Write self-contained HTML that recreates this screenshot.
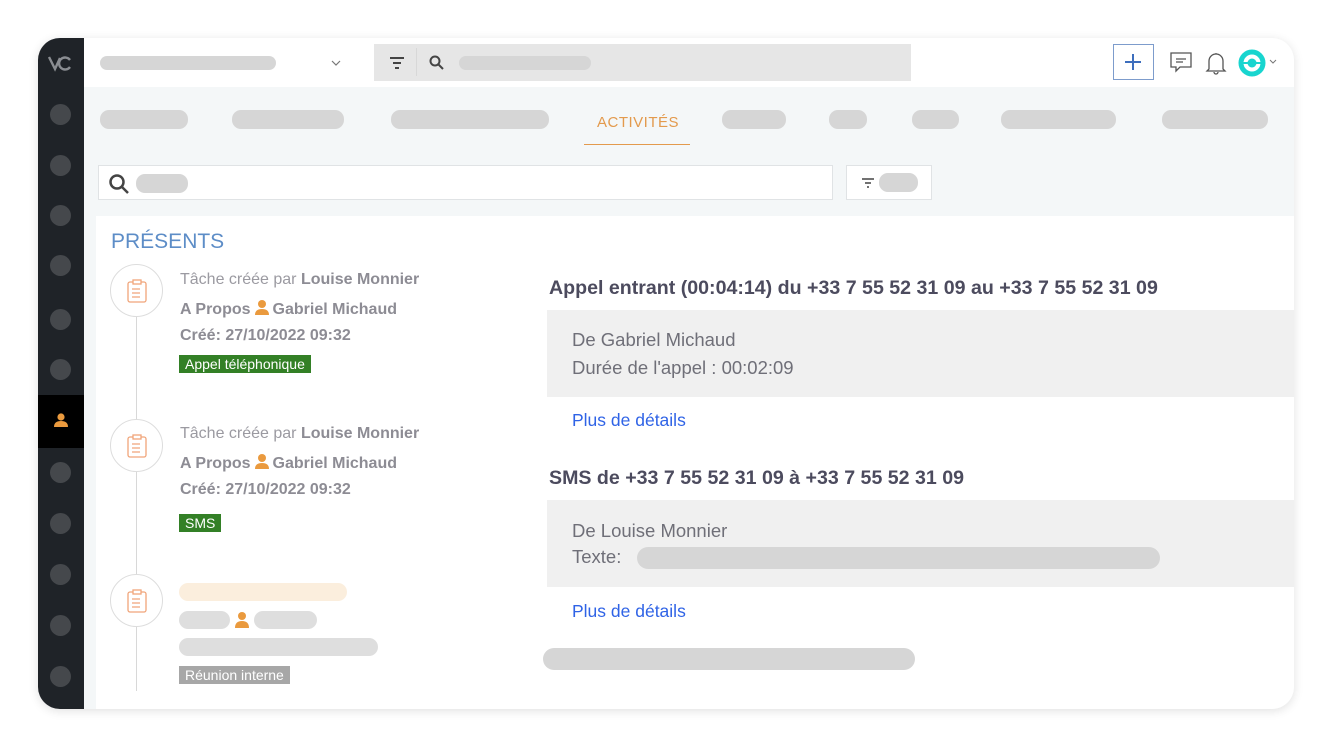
<!DOCTYPE html><html><head><meta charset="utf-8"><style>
*{margin:0;padding:0;box-sizing:border-box}
body{width:1332px;height:747px;background:#fff;font-family:"Liberation Sans",sans-serif;position:relative;overflow:hidden}
.a{position:absolute}
.card{left:38px;top:38px;width:1256px;height:671px;border-radius:22px;background:#f4f7f8;box-shadow:0 2px 10px rgba(0,0,0,.12);overflow:hidden}
.sb{left:0;top:0;width:46px;height:671px;background:#1f2328}
.dot{left:12px;width:21px;height:21px;border-radius:50%;background:#45484c}
.pill{background:#d6d6d6;border-radius:9px;height:18px}
.t{color:#8d8c94;font-size:16px;font-weight:bold}
.tag{color:#fff;font-size:14px;padding:1px 6px;}
.blue{color:#2f63e6;font-size:17.5px}
.pi{display:inline-block;vertical-align:-2px;margin:0 3px}
</style></head><body>
<div class="a card">
 <div class="a sb">
  <svg class="a" style="left:9px;top:16px" width="26" height="18" viewBox="0 0 26 18"><path d="M2 3 L8 15 L13 4" fill="none" stroke="#8a8d92" stroke-width="2.4"/><path d="M23 6 A6 6 0 1 0 23 13" fill="none" stroke="#8a8d92" stroke-width="2.4"/></svg>
  <div class="a dot" style="top:66px"></div><div class="a dot" style="top:117px"></div><div class="a dot" style="top:167px"></div><div class="a dot" style="top:217px"></div><div class="a dot" style="top:271px"></div><div class="a dot" style="top:321px"></div>
  <div class="a" style="left:0;top:357px;width:46px;height:53px;background:#000"></div>
  <svg class="a" style="left:15px;top:374px" width="16" height="16" viewBox="0 0 16 16"><circle cx="8" cy="5" r="3.6" fill="#ea9a3e"/><path d="M1 15 Q1 9 8 9 Q15 9 15 15Z" fill="#ea9a3e"/></svg>
  <div class="a dot" style="top:424px"></div><div class="a dot" style="top:475px"></div><div class="a dot" style="top:526px"></div><div class="a dot" style="top:577px"></div><div class="a dot" style="top:628px"></div>
 </div>
 <div class="a" style="left:46px;top:0;width:1210px;height:49px;background:#fff"></div>
 <div class="a pill" style="left:62px;top:18px;width:176px;height:14px"></div>
 <svg class="a" style="left:292px;top:21px" width="12" height="8"><path d="M2 2 L6 6 L10 2" fill="none" stroke="#777" stroke-width="1.2"/></svg>
 <div class="a" style="left:336px;top:6px;width:537px;height:37px;background:#e6e6e6"></div>
 <div class="a" style="left:378px;top:10px;width:1px;height:28px;background:#d8d8d8"></div>
 <svg class="a" style="left:352px;top:19px" width="14" height="12"><path d="M0 1h14M3 6h8M5 11h4" stroke="#444" stroke-width="2"/></svg>
 <svg class="a" style="left:391px;top:17px" width="15" height="15"><circle cx="6" cy="6" r="4.5" fill="none" stroke="#444" stroke-width="2"/><path d="M9.5 9.5L14 14" stroke="#444" stroke-width="2"/></svg>
 <div class="a pill" style="left:421px;top:18px;width:132px;height:14px"></div>
 <div class="a" style="left:1075px;top:6px;width:41px;height:36px;border:1.5px solid #7d9ccc"></div>
 <svg class="a" style="left:1086px;top:15px" width="18" height="18"><path d="M9 1v16M1 9h16" stroke="#3d6ebd" stroke-width="2"/></svg>
 <svg class="a" style="left:1131px;top:13px" width="24" height="24" viewBox="0 0 24 24"><path d="M2 2h20v14H11l-4 4v-4H2z" fill="none" stroke="#555" stroke-width="1.3"/><path d="M7 8h10M7 11h7" stroke="#555" stroke-width="1.3"/></svg>
 <svg class="a" style="left:1167px;top:13px" width="22" height="24" viewBox="0 0 22 24"><path d="M4 18V10a7 7 0 0 1 14 0v8l2 2H2z" fill="none" stroke="#555" stroke-width="1.3"/><path d="M9 21a2 2 0 0 0 4 0" fill="none" stroke="#555" stroke-width="1.3"/><path d="M11 2v1" stroke="#555"/></svg>
 <svg class="a" style="left:1200px;top:11px" width="28" height="28"><circle cx="14" cy="14" r="11" fill="none" stroke="#18d5cf" stroke-width="5"/><circle cx="14" cy="14" r="4.5" fill="#18d5cf"/><path d="M3 14h22" stroke="#18d5cf" stroke-width="2"/></svg>
 <svg class="a" style="left:1231px;top:21px" width="8" height="6"><path d="M1 1l3 3 3-3" fill="none" stroke="#777"/></svg>
 <div class="a pill" style="left:62px;top:72px;width:88px;height:19px"></div>
 <div class="a pill" style="left:194px;top:72px;width:112px;height:19px"></div>
 <div class="a pill" style="left:353px;top:72px;width:158px;height:19px"></div>
 <div class="a" style="left:559px;top:76px;color:#e39a4d;font-size:15px;letter-spacing:.5px">ACTIVITÉS</div>
 <div class="a" style="left:546px;top:106px;width:106px;height:1px;background:#e39a4d"></div>
 <div class="a pill" style="left:684px;top:72px;width:64px;height:19px"></div>
 <div class="a pill" style="left:791px;top:72px;width:38px;height:19px"></div>
 <div class="a pill" style="left:874px;top:72px;width:47px;height:19px"></div>
 <div class="a pill" style="left:963px;top:72px;width:115px;height:19px"></div>
 <div class="a pill" style="left:1124px;top:72px;width:106px;height:19px"></div>
 <div class="a" style="left:60px;top:127px;width:735px;height:35px;background:#fff;border:1px solid #e0e3e5"></div>
 <svg class="a" style="left:70px;top:135px" width="22" height="22"><circle cx="9" cy="9" r="6.5" fill="none" stroke="#444" stroke-width="2.5"/><path d="M13.5 13.5L20 20" stroke="#444" stroke-width="2.5"/></svg>
 <div class="a pill" style="left:98px;top:136px;width:52px;height:19px"></div>
 <div class="a" style="left:808px;top:127px;width:86px;height:35px;background:#fff;border:1px solid #e0e3e5"></div>
 <svg class="a" style="left:824px;top:140px" width="12" height="10"><path d="M0 1h12M3 5h6M5 9h2" stroke="#444" stroke-width="1.5"/></svg>
 <div class="a pill" style="left:841px;top:135px;width:39px;height:19px"></div>
 <div class="a" style="left:58px;top:178px;width:1198px;height:493px;background:#fff"></div>
 <div class="a" style="left:73px;top:192px;color:#5d8dc7;font-size:21px">PRÉSENTS</div>
 <div class="a" style="left:98px;top:248px;width:1px;height:405px;background:#d8d8d8"></div>
 <div class="a" style="left:72px;top:226px;width:53px;height:53px;border-radius:50%;background:#fff;border:1.5px solid #ddd"></div>
 <div class="a" style="left:72px;top:381px;width:53px;height:53px;border-radius:50%;background:#fff;border:1.5px solid #ddd"></div>
 <div class="a" style="left:72px;top:536px;width:53px;height:53px;border-radius:50%;background:#fff;border:1.5px solid #ddd"></div>
 <svg class="a" style="left:89px;top:241px" width="20" height="24" viewBox="0 0 20 24"><rect x="1" y="3" width="18" height="20" rx="2" fill="none" stroke="#f0a57a" stroke-width="1.3"/><rect x="6" y="1" width="8" height="4" fill="#fff" stroke="#f0a57a" stroke-width="1.3"/><path d="M5 10h8M5 14h8M5 18h8" stroke="#f0a57a" stroke-width="1.2"/></svg>
 <svg class="a" style="left:89px;top:396px" width="20" height="24" viewBox="0 0 20 24"><rect x="1" y="3" width="18" height="20" rx="2" fill="none" stroke="#f0a57a" stroke-width="1.3"/><rect x="6" y="1" width="8" height="4" fill="#fff" stroke="#f0a57a" stroke-width="1.3"/><path d="M5 10h8M5 14h8M5 18h8" stroke="#f0a57a" stroke-width="1.2"/></svg>
 <svg class="a" style="left:89px;top:551px" width="20" height="24" viewBox="0 0 20 24"><rect x="1" y="3" width="18" height="20" rx="2" fill="none" stroke="#f0a57a" stroke-width="1.3"/><rect x="6" y="1" width="8" height="4" fill="#fff" stroke="#f0a57a" stroke-width="1.3"/><path d="M5 10h8M5 14h8M5 18h8" stroke="#f0a57a" stroke-width="1.2"/></svg>
 <div class="a t" style="left:142px;top:233px;font-weight:normal;color:#9b9aa1">Tâche créée par <b style="color:#8d8c94">Louise Monnier</b></div>
 <div class="a t" style="left:142px;top:261px">A Propos<svg class="pi" width="16" height="17"><circle cx="8" cy="5" r="4" fill="#ea9a3e"/><path d="M1 16Q1 10 8 10Q15 10 15 16Z" fill="#ea9a3e"/></svg>Gabriel Michaud</div>
 <div class="a t" style="left:142px;top:289px">Créé: 27/10/2022 09:32</div>
 <div class="a tag" style="left:141px;top:317px;background:#338026">Appel téléphonique</div>
 <div class="a t" style="left:142px;top:387px;font-weight:normal;color:#9b9aa1">Tâche créée par <b style="color:#8d8c94">Louise Monnier</b></div>
 <div class="a t" style="left:142px;top:415px">A Propos<svg class="pi" width="16" height="17"><circle cx="8" cy="5" r="4" fill="#ea9a3e"/><path d="M1 16Q1 10 8 10Q15 10 15 16Z" fill="#ea9a3e"/></svg>Gabriel Michaud</div>
 <div class="a t" style="left:142px;top:443px">Créé: 27/10/2022 09:32</div>
 <div class="a tag" style="left:141px;top:476px;background:#338026">SMS</div>
 <div class="a pill" style="left:141px;top:545px;width:168px;height:18px;background:#fbeedd"></div>
 <div class="a pill" style="left:141px;top:573px;width:51px;height:18px;background:#dedede"></div>
 <svg class="a" style="left:196px;top:573px" width="16" height="18"><circle cx="8" cy="5" r="4" fill="#ea9a3e"/><path d="M1 17Q1 10 8 10Q15 10 15 17Z" fill="#ea9a3e"/></svg>
 <div class="a pill" style="left:216px;top:573px;width:63px;height:18px;background:#dedede"></div>
 <div class="a pill" style="left:141px;top:600px;width:199px;height:18px;background:#dedede"></div>
 <div class="a tag" style="left:141px;top:628px;background:#a7a7a7">Réunion interne</div>
 <div class="a" style="left:511px;top:239px;font-size:19.6px;font-weight:bold;color:#4c4b5e">Appel entrant (00:04:14) du +33 7 55 52 31 09 au +33 7 55 52 31 09</div>
 <div class="a" style="left:509px;top:272px;width:747px;height:87px;background:#f0f0f0"></div>
 <div class="a" style="left:534px;top:291px;font-size:18.5px;color:#6f6f78">De Gabriel Michaud</div>
 <div class="a" style="left:534px;top:319px;font-size:18.5px;color:#6f6f78">Durée de l'appel : 00:02:09</div>
 <div class="a blue" style="left:534px;top:372px">Plus de détails</div>
 <div class="a" style="left:511px;top:429px;font-size:19.6px;font-weight:bold;color:#4c4b5e">SMS de +33 7 55 52 31 09 à +33 7 55 52 31 09</div>
 <div class="a" style="left:509px;top:462px;width:747px;height:87px;background:#f0f0f0"></div>
 <div class="a" style="left:534px;top:482px;font-size:18.5px;color:#6f6f78">De Louise Monnier</div>
 <div class="a" style="left:534px;top:508px;font-size:18.5px;color:#6f6f78">Texte:</div>
 <div class="a pill" style="left:599px;top:509px;width:523px;height:22px;border-radius:11px"></div>
 <div class="a blue" style="left:534px;top:563px">Plus de détails</div>
 <div class="a pill" style="left:505px;top:610px;width:372px;height:22px;border-radius:11px"></div>
</div>
</body></html>
